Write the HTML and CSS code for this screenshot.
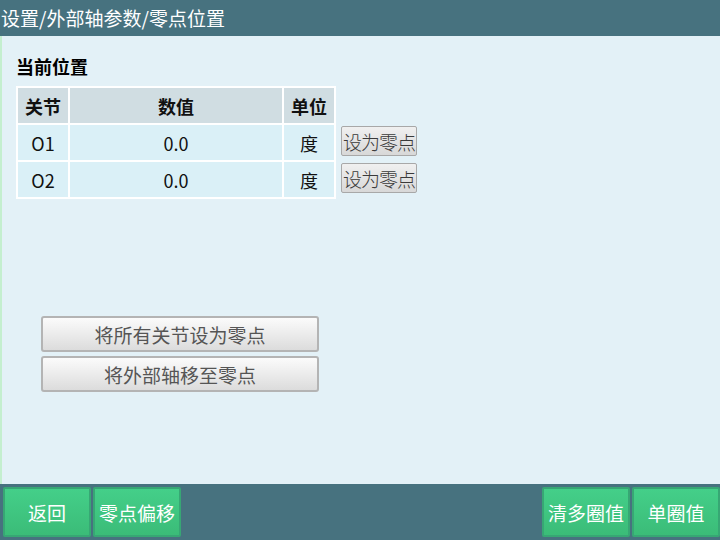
FILE: index.html
```html
<!DOCTYPE html>
<html lang="zh">
<head>
<meta charset="utf-8">
<link rel="stylesheet" href="styles.css">
</head>
<body>
<div class="app">
  <header class="titlebar">设置/外部轴参数/零点位置</header>
  <main class="content">
    <h2 class="section-title">当前位置</h2>
    <div class="table-wrap">
      <table class="pos-table">
        <thead>
          <tr><th class="c-joint">关节</th><th class="c-val">数值</th><th class="c-unit">单位</th></tr>
        </thead>
        <tbody>
          <tr><td>O1</td><td>0.0</td><td>度</td></tr>
          <tr><td>O2</td><td>0.0</td><td>度</td></tr>
        </tbody>
      </table>
      <div class="row-actions">
        <button class="small-btn">设为零点</button>
        <button class="small-btn">设为零点</button>
      </div>
    </div>
    <div class="big-actions">
      <button class="big-btn">将所有关节设为零点</button>
      <button class="big-btn">将外部轴移至零点</button>
    </div>
  </main>
  <footer class="footer">
    <div class="footer-group">
      <button class="nav-btn">返回</button>
      <button class="nav-btn">零点偏移</button>
    </div>
    <div class="footer-group">
      <button class="nav-btn">清多圈值</button>
      <button class="nav-btn">单圈值</button>
    </div>
  </footer>
</div>
</body>
</html>
```
FILE: styles.css
```css
* { box-sizing: border-box; }
html, body {
  margin: 0;
  padding: 0;
}
body {
  width: 720px;
  height: 540px;
  overflow: hidden;
  font-family: "Noto Sans CJK SC", "Noto Sans", sans-serif;
  background: #e3f1f7;
}
.app {
  display: flex;
  flex-direction: column;
  height: 540px;
}
.titlebar {
  height: 36px;
  background: #47727f;
  color: #ffffff;
  font-size: 19px;
  line-height: 36px;
  padding-left: 1px;
  white-space: nowrap;
}
.content {
  flex: 1;
  background: #e3f1f7;
  border-left: 2px solid #c4efcf;
  padding: 0 0 0 14px;
}
.section-title {
  margin: 15px 0 0 0;
  font-size: 18px;
  font-weight: bold;
  line-height: 30px;
  color: #000;
}
.table-wrap {
  display: flex;
  align-items: flex-start;
  margin-top: 5px;
}
.pos-table {
  border-collapse: separate;
  border-spacing: 2px;
  background: #ffffff;
  font-size: 18px;
  color: #111;
}
.pos-table th,
.pos-table td {
  height: 35px;
  padding: 0;
  text-align: center;
  vertical-align: middle;
}
.pos-table th {
  background: #d0dde2;
  font-weight: bold;
}
.pos-table td {
  background: #daf0f7;
}
.c-joint { width: 50px; }
.c-val { width: 212px; }
.c-unit { width: 50px; }
.row-actions {
  display: flex;
  flex-direction: column;
  gap: 7px;
  margin-top: 40px;
  margin-left: 5px;
}
.small-btn {
  width: 76px;
  height: 30px;
  padding: 0;
  font-family: "Noto Sans CJK SC", sans-serif;
  font-size: 19px;
  font-weight: 300;
  color: #3a3a3a;
  background: linear-gradient(#f0f0f0, #d8d8d8);
  border: 1px solid #a8a8a8;
  border-radius: 2px;
  white-space: nowrap;
  overflow: hidden;
  letter-spacing: -1px;
}
.big-actions {
  display: flex;
  flex-direction: column;
  gap: 4px;
  margin-top: 117px;
  margin-left: 25px;
  width: 278px;
}
.big-btn {
  height: 36px;
  font-family: "Noto Sans CJK SC", sans-serif;
  font-size: 19px;
  color: #555;
  background: linear-gradient(#fbfbfb, #dcdcdc);
  border: 2px solid #b4b4b4;
  border-radius: 3px;
  padding: 0;
}
.footer {
  height: 56px;
  background: #47727f;
  display: flex;
  justify-content: space-between;
  align-items: flex-start;
  padding: 3px 0 0 3px;
}
.footer-group {
  display: flex;
  gap: 2px;
}
.nav-btn {
  width: 88px;
  height: 50px;
  padding: 0;
  font-family: "Noto Sans CJK SC", sans-serif;
  font-size: 19px;
  color: #ffffff;
  background: linear-gradient(#44cf89, #3bbc78);
  border: 2px solid #37a774;
  border-radius: 2px;
  white-space: nowrap;
}
```
